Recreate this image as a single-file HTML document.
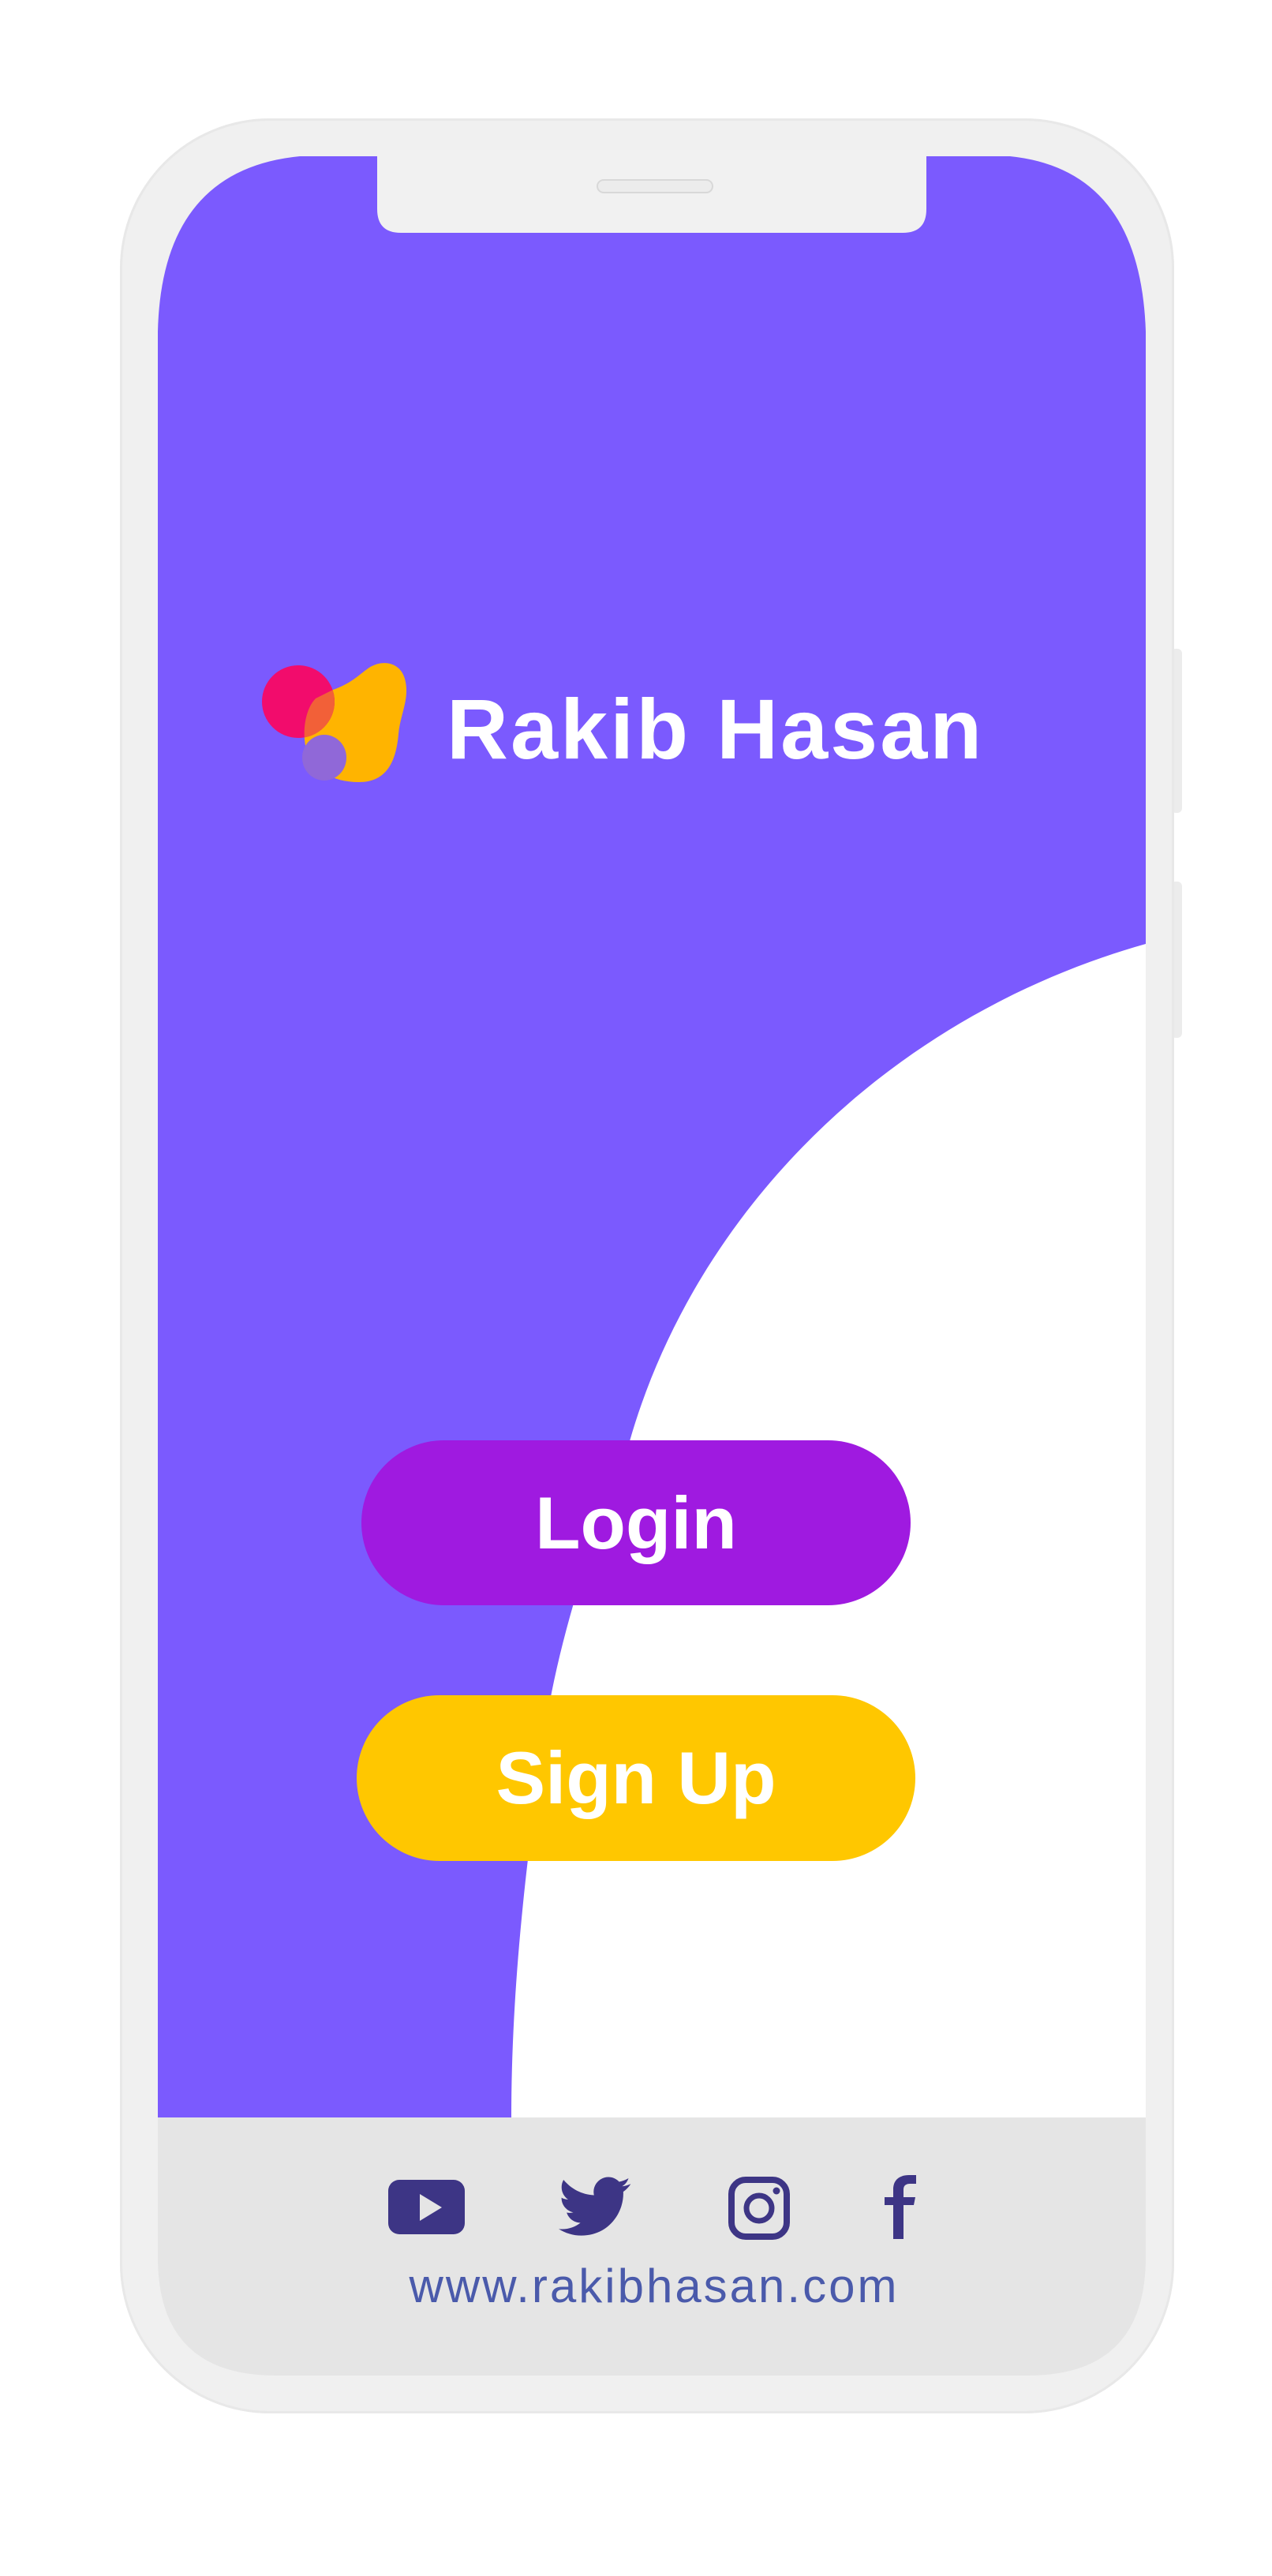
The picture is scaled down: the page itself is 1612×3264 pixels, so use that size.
<!DOCTYPE html>
<html><head><meta charset="utf-8"><style>
html,body{margin:0;padding:0;background:#fff;}
body{width:1612px;height:3264px;position:relative;overflow:hidden;font-family:"Liberation Sans",sans-serif;}
.abs{position:absolute;}
.btn{position:absolute;border-radius:110px;color:#fff;font-weight:bold;text-align:center;font-family:"Liberation Sans",sans-serif;}
</style></head><body>
<div class="abs" style="left:1484px;top:822px;width:14px;height:208px;background:#ececec;border-radius:6px;"></div>
<div class="abs" style="left:1484px;top:1117px;width:14px;height:198px;background:#ececec;border-radius:6px;"></div>
<div class="abs" style="left:152px;top:150px;width:1336px;height:2908px;background:#f0f0f0;border-radius:190px;box-shadow:0 0 0 3px #e8e8e8 inset;"></div>
<svg class="abs" style="left:0;top:0" width="1612" height="3264" viewBox="0 0 1612 3264">
  <defs>
    <clipPath id="scr"><path d="M200,420 Q205,215 380,198 L1280,198 Q1445,215 1452,420 L1452,2860 Q1452,3010 1302,3010 L350,3010 Q200,3010 200,2860 Z"/></clipPath>
    <clipPath id="pk"><circle cx="378" cy="889" r="46"/></clipPath>
  </defs>
  <g clip-path="url(#scr)">
    <rect x="200" y="198" width="1252" height="2485" fill="#7b5afe"/>
    <path d="M1452,1196 C1120,1290 880,1540 798,1826 C760,1920 705,2080 690,2200 C660,2400 648,2550 648,2683 L1452,2683 Z" fill="#ffffff"/>
    <rect x="200" y="2683" width="1252" height="330" fill="#e5e5e5"/>
  </g>
  <path d="M478,190 L1174,190 L1174,265 Q1174,295 1144,295 L508,295 Q478,295 478,265 Z" fill="#f1f1f1"/>
  <rect x="757" y="228" width="146" height="16" rx="8" fill="#ececec" stroke="#d8d8d8" stroke-width="2"/>
  <path d="M422,874 C445,866 455,855 465,848 C480,836 506,836 513,860 C520,885 507,905 505,930 C502,965 490,991 455,991 C420,991 398,975 390,955 C382,935 385,900 400,885 Z" fill="#ffb400"/>
  <circle cx="378" cy="889" r="46" fill="#f20c6c"/>
  <path clip-path="url(#pk)" d="M422,874 C445,866 455,855 465,848 C480,836 506,836 513,860 C520,885 507,905 505,930 C502,965 490,991 455,991 C420,991 398,975 390,955 C382,935 385,900 400,885 Z" fill="#f26038"/>
  <ellipse cx="411" cy="960" rx="28" ry="29" fill="#9068d8"/>
  <text x="566" y="961" font-family="Liberation Sans, sans-serif" font-weight="bold" font-size="108" letter-spacing="3" fill="#fff">Rakib Hasan</text>
  <rect x="492" y="2762" width="97" height="69" rx="14" fill="#3d3585"/>
  <path d="M532,2780 L560,2797 L532,2814 Z" fill="#e5e5e5"/>
  <g transform="translate(708,2750) scale(3.8)" fill="#3d3585">
    <path d="M23.954 4.569c-.885.389-1.83.654-2.825.775 1.014-.611 1.794-1.574 2.163-2.723-.951.555-2.005.959-3.127 1.184-.896-.959-2.173-1.559-3.591-1.559-2.717 0-4.92 2.203-4.92 4.917 0 .39.045.765.127 1.124C7.691 8.094 4.066 6.13 1.64 3.161c-.427.722-.666 1.561-.666 2.475 0 1.71.87 3.213 2.188 4.096-.807-.026-1.566-.248-2.228-.616v.061c0 2.385 1.693 4.374 3.946 4.827-.413.111-.849.171-1.296.171-.314 0-.615-.03-.916-.086.631 1.953 2.445 3.377 4.604 3.417-1.68 1.319-3.809 2.105-6.102 2.105-.39 0-.779-.023-1.17-.067 2.189 1.394 4.768 2.209 7.557 2.209 9.054 0 13.999-7.496 13.999-13.986 0-.209 0-.42-.015-.63.961-.689 1.8-1.56 2.46-2.548l-.047-.02z"/>
  </g>
  <rect x="927" y="2762" width="70" height="72" rx="18" fill="none" stroke="#3d3585" stroke-width="8"/>
  <circle cx="962" cy="2798" r="16" fill="none" stroke="#3d3585" stroke-width="7"/>
  <circle cx="984" cy="2776" r="4.5" fill="#3d3585"/>
  <path d="M1132,2837 L1132,2794 L1121,2794 L1121,2784 L1132,2784 L1132,2774 C1132,2762 1140,2756 1152,2756 L1161,2756 L1161,2767 L1154,2767 C1147,2767 1145,2770 1145,2775 L1145,2784 L1160,2784 L1158,2794 L1145,2794 L1145,2837 Z" fill="#3d3585"/>
  <text x="829" y="2917" text-anchor="middle" font-family="Liberation Sans, sans-serif" font-size="60" letter-spacing="3" fill="#4a5aab">www.rakibhasan.com</text>
</svg>
<div class="btn" style="left:458px;top:1825px;width:696px;height:209px;background:#9f1ae0;font-size:94px;line-height:209px;">Login</div>
<div class="btn" style="left:452px;top:2148px;width:708px;height:210px;background:#ffc700;font-size:94px;line-height:210px;">Sign Up</div>
</body></html>
